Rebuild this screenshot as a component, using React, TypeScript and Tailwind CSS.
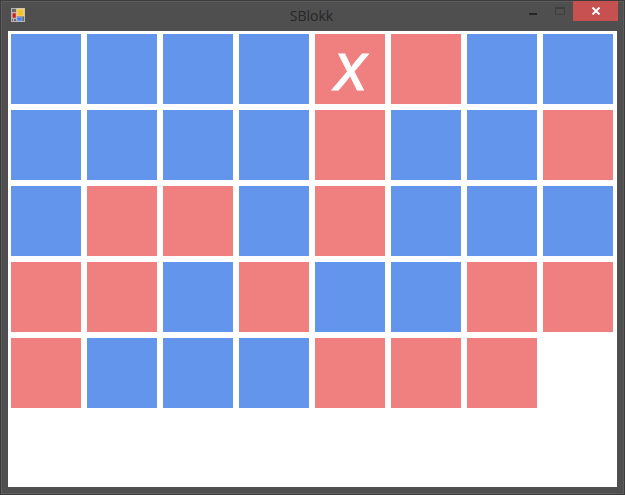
const B = 'b';
const R = 'r';
const cells = [
  B, B, B, B, R, R, B, B,
  B, B, B, B, R, B, B, R,
  B, R, R, B, R, B, B, B,
  R, R, B, R, B, B, R, R,
  R, B, B, B, R, R, R,
];

export default function App() {
  return (
    <div className="w-[625px] h-[495px] bg-[#4f4f4f] border border-[#3c3c3c] flex flex-col overflow-hidden" style={{ boxShadow: 'inset 0 0 0 1px #5e5e5e' }}>
      <div className="h-[30px] shrink-0 flex items-start relative">
        <svg width="15" height="15" viewBox="0 0 15 15" className="ml-[10px] mt-[7px] shrink-0">
          <rect x="0.5" y="0.5" width="13" height="13" fill="#6a6a6a" stroke="#b5b5b5" />
          <path d="M0.5 4.5 H5 M0.5 10.5 H5 M5.5 0.5 V13.5 M2.5 10.5 V13.5" stroke="#b5b5b5" strokeWidth="1" fill="none" />
          <rect x="1.5" y="5" width="3.5" height="5" fill="#c8201c" stroke="#e8b0a0" strokeWidth="0.5" />
          <rect x="6" y="1" width="7" height="7" fill="#f2c132" stroke="#f8e6a0" strokeWidth="0.7" />
          <rect x="6" y="9" width="5" height="4" fill="#4a7fe0" stroke="#a8c4f0" strokeWidth="0.5" />
        </svg>
        <div className="absolute left-0 right-[2px] top-[6px] text-center text-[14px] leading-[18px] text-[#262626]" style={{ fontFamily: '"Open Sans", "Noto Sans", sans-serif' }}>
          SBlokk
        </div>
        <div className="ml-auto flex items-start relative">
          <svg width="10" height="4" viewBox="0 0 10 4" className="mt-[11px] mr-[16px]">
            <rect x="1" y="1" width="8" height="2" fill="#262626" />
          </svg>
          <svg width="12" height="10" viewBox="0 0 12 10" className="mt-[5px] mr-[7px]">
            <rect x="1.5" y="1.5" width="9" height="7" fill="none" stroke="#3f3f3f" strokeWidth="1" />
            <rect x="1" y="1" width="10" height="2" fill="#3f3f3f" />
          </svg>
          <div className="w-[45px] h-[20px] bg-[#c75050] flex items-center justify-center mr-[6px]">
            <svg width="10" height="8" viewBox="0 0 10 8">
              <path d="M1.5 0.5 L8.5 7.5 M8.5 0.5 L1.5 7.5" stroke="#ffffff" strokeWidth="2" />
            </svg>
          </div>
        </div>
      </div>
      <div className="ml-[7px] w-[609px] h-[456px] bg-white p-[3px]">
        <div className="grid grid-cols-[repeat(8,70px)] auto-rows-[70px] gap-[6px]">
          {cells.map((c, i) => (
            <div
              key={i}
              className={`flex items-center justify-center ${c === 'b' ? 'bg-[#6495ed]' : 'bg-[#f08080]'}`}
            >
              {i === 4 && (
                <span className="text-white italic font-medium text-[49px] leading-none mt-[6px] [-webkit-text-stroke:0.8px_white]" style={{ fontFamily: 'Inter, sans-serif' }}>
                  X
                </span>
              )}
            </div>
          ))}
        </div>
      </div>
    </div>
  );
}
